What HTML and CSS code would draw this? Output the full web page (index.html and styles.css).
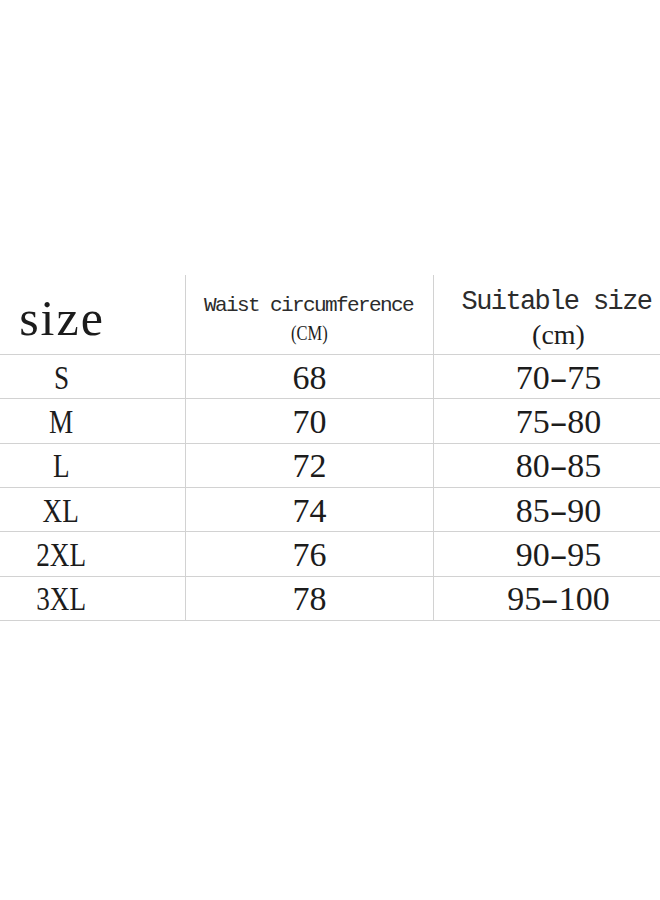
FILE: index.html
```html
<!DOCTYPE html>
<html lang="en">
<head>
<meta charset="utf-8">
<title>Size chart</title>
<link rel="stylesheet" href="styles.css">
</head>
<body>
<main class="page">
  <div class="chart">
    <div class="cell head c1"><span class="size-word">size</span></div>
    <div class="cell head c2"><span class="h2a">Waist circumference</span><span class="h2b">(CM)</span></div>
    <div class="cell head c3"><span class="h3a">Suitable size</span><span class="h3b">(cm)</span></div>

    <div class="cell c1"><span class="lbl">S</span></div>
    <div class="cell c2">68</div>
    <div class="cell c3">70<span class="dash">-</span>75</div>

    <div class="cell c1"><span class="lbl">M</span></div>
    <div class="cell c2">70</div>
    <div class="cell c3">75<span class="dash">-</span>80</div>

    <div class="cell c1"><span class="lbl">L</span></div>
    <div class="cell c2">72</div>
    <div class="cell c3">80<span class="dash">-</span>85</div>

    <div class="cell c1"><span class="lbl">XL</span></div>
    <div class="cell c2">74</div>
    <div class="cell c3">85<span class="dash">-</span>90</div>

    <div class="cell c1"><span class="lbl">2XL</span></div>
    <div class="cell c2">76</div>
    <div class="cell c3">90<span class="dash">-</span>95</div>

    <div class="cell c1"><span class="lbl">3XL</span></div>
    <div class="cell c2">78</div>
    <div class="cell c3">95<span class="dash">-</span>100</div>
  </div>
</main>
</body>
</html>
```
FILE: styles.css
```css
html, body {
  margin: 0;
  padding: 0;
  background: #ffffff;
  overflow: hidden;
}

.page {
  width: 660px;
  height: 900px;
  padding-top: 275px;
  box-sizing: border-box;
  overflow: hidden;
}

.chart {
  display: grid;
  grid-template-columns: 185px 248px 250px;
  grid-template-rows: 80px repeat(6, 44.33px);
  width: 683px;
  font-family: "Liberation Serif", "Times New Roman", serif;
  color: #1c1c1c;
}

.cell {
  box-sizing: border-box;
  border-bottom: 1px solid #d2d2d2;
  display: flex;
  align-items: center;
  justify-content: center;
  font-size: 34px;
  line-height: 1;
  padding-top: 2px;
}

.c1 {
  padding-right: 63px;
}

.c2, .c3 {
  border-left: 1px solid #d2d2d2;
}

.head {
  flex-direction: column;
  justify-content: flex-start;
  padding-top: 0;
}

.head.c1 {
  padding-top: 18px;
}

.size-word {
  font-size: 50px;
  line-height: 50px;
  letter-spacing: 2px;
  margin-right: -2px;
}

.head.c2 {
  padding-top: 18px;
}

.h2a {
  font-family: "Liberation Mono", "Courier New", monospace;
  font-size: 21px;
  line-height: 26px;
  letter-spacing: -1.6px;
  margin-right: 2px;
  white-space: nowrap;
  color: #2c2c2c;
}

.h2b {
  font-size: 22px;
  line-height: 28px;
  display: inline-block;
  transform: scaleX(0.75);
}

.head.c3 {
  padding-top: 12px;
}

.h3a {
  font-family: "Liberation Mono", "Courier New", monospace;
  font-size: 27px;
  line-height: 31px;
  letter-spacing: -1.6px;
  margin-right: 4px;
  white-space: nowrap;
  color: #2c2c2c;
}

.h3b {
  font-size: 28px;
  line-height: 33px;
}

.lbl {
  display: inline-block;
  transform: scaleX(0.8);
}

.dash {
  display: inline-block;
  transform: scaleX(1.6);
  margin: 0 3px;
}
```
